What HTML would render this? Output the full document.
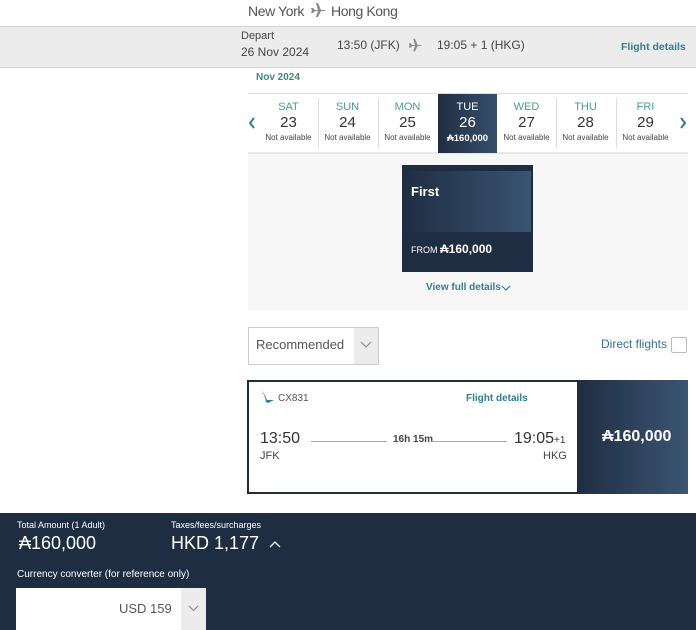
<!DOCTYPE html>
<html><head><style>
*{box-sizing:border-box;margin:0;padding:0}
body{width:696px;height:630px;overflow:hidden;background:#fff;font-family:"Liberation Sans",sans-serif;color:#333;position:relative}
.a{position:absolute}
.teal{color:#2f7f8f}
.cell{position:absolute;top:94px;width:59px;height:59px;text-align:center}
.cell .d{font-size:11px;color:#4a9a9a;margin-top:7px}
.cell .n{font-size:15px;color:#333;margin-top:1px}
.cell .s{font-size:8px;color:#444;margin-top:2px}
.sep{position:absolute;top:98px;width:1px;height:50px;background:#ddd}
</style></head><body>
<div class="a" style="left:248px;top:3px;font-size:14px;color:#555;letter-spacing:-0.4px">New York</div>
<svg class="a" style="left:309px;top:1px" width="18" height="18" viewBox="0 0 18 18"><path d="M2 7 L4 7 L6 9 L9 9 L7 2 L9 2 L12 9 L16 9 Q17 10 16 10 L12 10 L9 16 L7 16 L9 10 L6 10 L4 12 L2 12 L3 9.5Z" fill="#888"/></svg>
<div class="a" style="left:331px;top:3px;font-size:14px;color:#555;letter-spacing:-0.4px">Hong Kong</div>
<div class="a" style="left:0;top:26px;width:696px;height:42px;background:#ececec;border-top:1px solid #d4d4d4;border-bottom:1px solid #d4d4d4"></div>
<div class="a" style="left:241px;top:30px;font-size:11px;color:#444">Depart</div>
<div class="a" style="left:241px;top:45px;font-size:12px;color:#444">26 Nov 2024</div>
<div class="a" style="left:337px;top:38px;font-size:12px;color:#444">13:50 (JFK)</div>
<svg class="a" style="left:407px;top:37px" width="16" height="16" viewBox="0 0 18 18"><path d="M2 7 L4 7 L6 9 L9 9 L7 2 L9 2 L12 9 L16 9 Q17 10 16 10 L12 10 L9 16 L7 16 L9 10 L6 10 L4 12 L2 12 L3 9.5Z" fill="#888"/></svg>
<div class="a" style="left:437px;top:38px;font-size:12px;color:#444">19:05 + 1 (HKG)</div>
<div class="a teal" style="left:621px;top:41px;font-size:10.5px;font-weight:bold">Flight details</div>
<div class="a" style="left:256px;top:72px;font-size:10px;font-weight:bold;color:#3a8a80">Nov 2024</div>
<div class="a" style="left:248px;top:93px;width:440px;height:1px;background:#ddd"></div>
<div class="a" style="left:248px;top:152px;width:440px;height:2px;background:#e6e6e6"></div>
<svg class="a" style="left:248px;top:117px" width="8" height="12" viewBox="0 0 8 12"><path d="M6 1 L2 6 L6 11" stroke="#2f7f8f" stroke-width="2" fill="none"/></svg>
<svg class="a" style="left:679px;top:117px" width="8" height="12" viewBox="0 0 8 12"><path d="M2 1 L6 6 L2 11" stroke="#2f7f8f" stroke-width="2" fill="none"/></svg>
<div class="cell" style="left:259px"><div class="d">SAT</div><div class="n">23</div><div class="s">Not available</div></div>
<div class="sep" style="left:318px"></div>
<div class="cell" style="left:318px"><div class="d">SUN</div><div class="n">24</div><div class="s">Not available</div></div>
<div class="sep" style="left:378px"></div>
<div class="cell" style="left:378px"><div class="d">MON</div><div class="n">25</div><div class="s">Not available</div></div>
<div class="cell" style="left:438px;background:linear-gradient(90deg,#1f2d42,#37506c)"><div class="d" style="color:#fff">TUE</div><div class="n" style="color:#fff">26</div><div class="s" style="color:#fff;font-size:9.5px;font-weight:bold">₳160,000</div></div>
<div class="cell" style="left:497px"><div class="d">WED</div><div class="n">27</div><div class="s">Not available</div></div>
<div class="sep" style="left:556px"></div>
<div class="cell" style="left:556px"><div class="d">THU</div><div class="n">28</div><div class="s">Not available</div></div>
<div class="sep" style="left:616px"></div>
<div class="cell" style="left:616px"><div class="d">FRI</div><div class="n">29</div><div class="s">Not available</div></div>
<div class="a" style="left:248px;top:154px;width:440px;height:156px;background:#f7f7f7"></div>
<div class="a" style="left:402px;top:165px;width:131px;height:107px;background:#1f2d42"></div>
<div class="a" style="left:403px;top:171px;width:128px;height:61px;background:linear-gradient(90deg,#1f2d42,#3a5472)"></div>
<div class="a" style="left:411px;top:184px;font-size:13px;font-weight:bold;color:#fff">First</div>
<div class="a" style="left:411px;top:242px;font-size:9px;color:#fff">FROM <span style="font-size:12px;font-weight:bold">₳160,000</span></div>
<div class="a teal" style="left:426px;top:282px;font-size:10px;font-weight:bold">View full details</div>
<svg class="a" style="left:501px;top:285px" width="10" height="7" viewBox="0 0 10 7"><path d="M1 1 L5 5 L9 1" stroke="#2f7f8f" stroke-width="1.2" fill="none"/></svg>
<div class="a" style="left:248px;top:327px;width:131px;height:38px;border:1px solid #ccc;background:#fff"></div>
<div class="a" style="left:354px;top:328px;width:24px;height:36px;background:#ececec"></div>
<div class="a" style="left:256px;top:337px;font-size:13px;color:#555">Recommended</div>
<svg class="a" style="left:360px;top:341px" width="12" height="8" viewBox="0 0 12 8"><path d="M1 1 L6 6 L11 1" stroke="#888" stroke-width="1" fill="none"/></svg>
<div class="a" style="left:601px;top:337px;font-size:12px;color:#3a6f99">Direct flights</div>
<div class="a" style="left:671px;top:337px;width:16px;height:16px;border:1px solid #bbb;border-radius:2px;background:#fff"></div>
<div class="a" style="left:247px;top:380px;width:441px;height:114px;border:2px solid #1f2d42;background:#fff"></div>
<div class="a" style="left:577px;top:380px;width:111px;height:114px;background:linear-gradient(90deg,#1f2d42,#3b5573)"></div>
<div class="a" style="left:602px;top:428px;font-size:16px;font-weight:bold;color:#fff">₳160,000</div>
<svg class="a" style="left:260px;top:389px" width="16" height="16" viewBox="0 0 16 16"><path d="M1 1 Q5 6 6 13 L8 14 L14 11 L7 11 Q5 5 1 1Z" fill="#2f7f8f"/></svg>
<div class="a" style="left:278px;top:393px;font-size:10px;color:#555">CX831</div>
<div class="a teal" style="left:466px;top:393px;font-size:10px;font-weight:bold">Flight details</div>
<div class="a" style="left:260px;top:430px;font-size:16px;color:#333">13:50</div>
<div class="a" style="left:260px;top:450px;font-size:11px;color:#444">JFK</div>
<div class="a" style="left:311px;top:441px;width:76px;height:1px;background:#aaa"></div>
<div class="a" style="left:393px;top:434px;font-size:10px;font-weight:bold;color:#444">16h 15m</div>
<div class="a" style="left:431px;top:441px;width:76px;height:1px;background:#aaa"></div>
<div class="a" style="left:514px;top:430px;font-size:16px;color:#333">19:05<span style="font-size:10px">+1</span></div>
<div class="a" style="left:543px;top:450px;font-size:11px;color:#444">HKG</div>
<div class="a" style="left:0;top:513px;width:696px;height:117px;background:#1f2d42"></div>
<div class="a" style="left:17px;top:520px;font-size:9px;color:#fff">Total Amount (1 Adult)</div>
<div class="a" style="left:19px;top:533px;font-size:18px;color:#fff">₳160,000</div>
<div class="a" style="left:171px;top:520px;font-size:9px;color:#fff">Taxes/fees/surcharges</div>
<div class="a" style="left:171px;top:533px;font-size:18px;color:#fff">HKD 1,177</div>
<svg class="a" style="left:269px;top:540px" width="12" height="8" viewBox="0 0 12 8"><path d="M1 7 L6 2 L11 7" stroke="#fff" stroke-width="1.3" fill="none"/></svg>
<div class="a" style="left:17px;top:569px;font-size:10px;color:#fff">Currency converter (for reference only)</div>
<div class="a" style="left:16px;top:588px;width:190px;height:42px;background:#fff"></div>
<div class="a" style="left:181px;top:588px;width:25px;height:42px;background:#ececec"></div>
<div class="a" style="left:119px;top:601px;font-size:13px;color:#555">USD 159</div>
<svg class="a" style="left:188px;top:605px" width="11" height="7" viewBox="0 0 11 7"><path d="M1 1 L5.5 5.5 L10 1" stroke="#888" stroke-width="1" fill="none"/></svg>
</body></html>
